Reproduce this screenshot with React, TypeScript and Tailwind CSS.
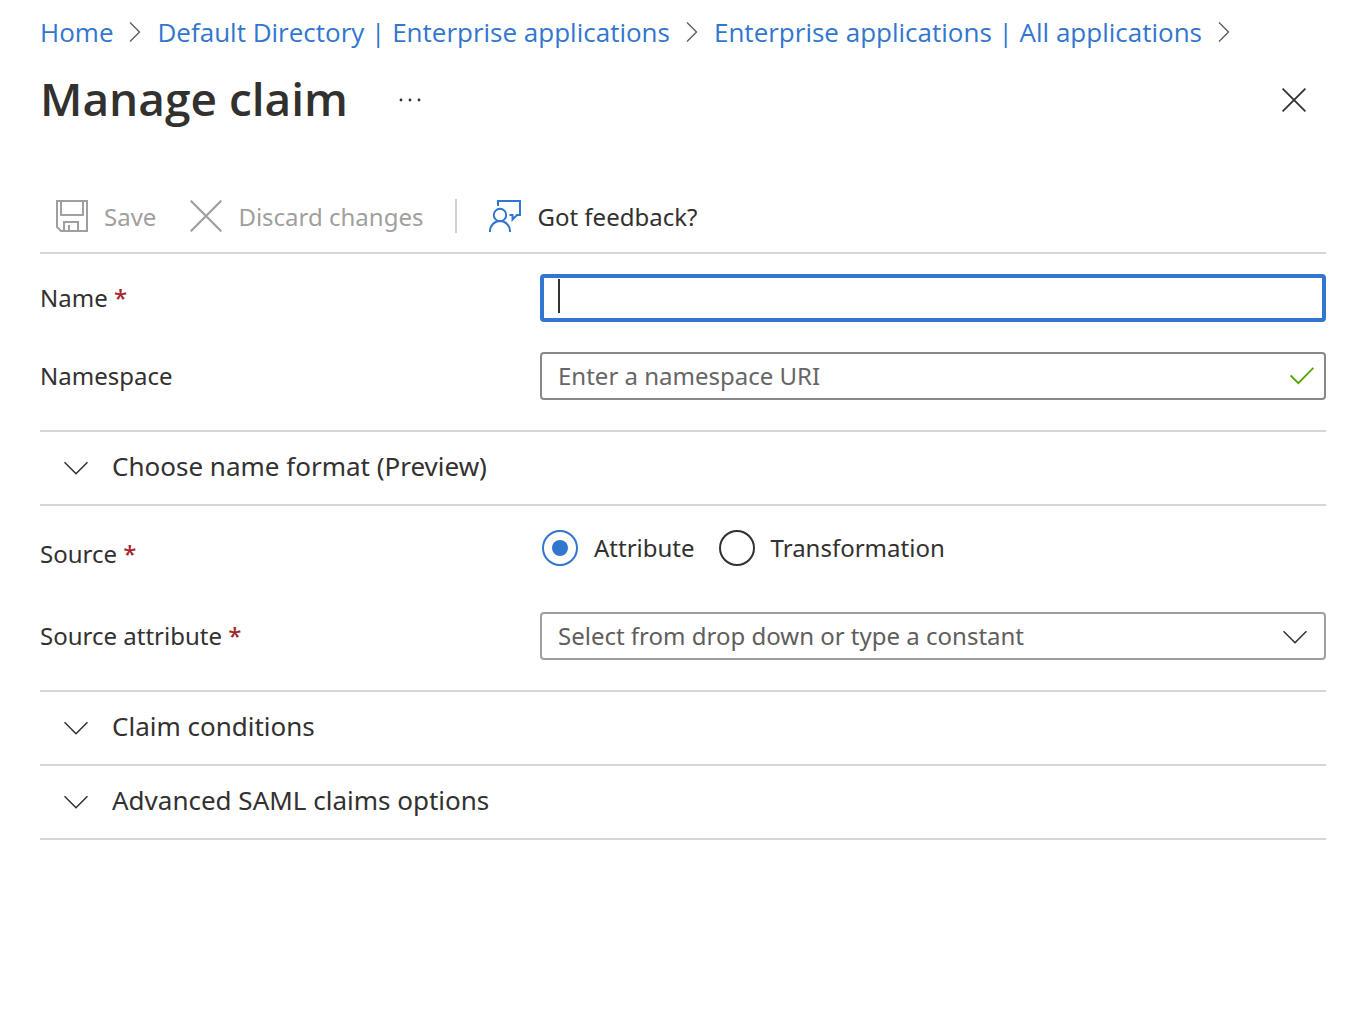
import { useState, type ReactNode } from "react";

const crumbs = [
  "Home",
  "Default Directory | Enterprise applications",
  "Enterprise applications | All applications",
];

function CrumbArrow() {
  return (
    <svg className="h-5 w-3 shrink-0" viewBox="0 0 12 20" fill="none" stroke="#605e5c" strokeWidth="1.4" aria-hidden="true">
      <path d="M1 0.5 10.5 10 1 19.5" />
    </svg>
  );
}

function ChevronDown() {
  return (
    <svg className="h-3.5 w-6 shrink-0" viewBox="0 0 24 14" fill="none" stroke="#323130" strokeWidth="1.6" aria-hidden="true">
      <path d="M0.5 1.2 12 12.7 23.5 1.2" />
    </svg>
  );
}

function SaveIcon() {
  return (
    <svg className="size-8 shrink-0" viewBox="0 0 32 32" fill="none" stroke="#a19f9d" strokeWidth="2" aria-hidden="true">
      <path d="M1 1H31V31H5L1 27Z" />
      <path d="M5 1V15H27V1" />
      <path d="M8 31V22H22V31M13 25V31" />
    </svg>
  );
}

function DiscardIcon() {
  return (
    <svg className="size-8 shrink-0" viewBox="0 0 32 32" fill="none" stroke="#a19f9d" strokeWidth="2.2" aria-hidden="true">
      <path d="M0.7 0.7 31.3 31.3M31.3 0.7 0.7 31.3" />
    </svg>
  );
}

function FeedbackIcon() {
  return (
    <svg className="size-8 shrink-0" viewBox="0 0 32 32" fill="none" stroke="#3276cf" strokeWidth="2" aria-hidden="true">
      <circle cx="11" cy="15" r="6.2" />
      <path d="M1 32V31A10 10 0 0 1 21 31V32" />
      <path d="M9 6V1H31V15H28L23.5 19.5V15H20.5" />
    </svg>
  );
}

function RequiredMark() {
  return <span className="font-medium text-[#a4262c]"> *</span>;
}

function Field({ label, htmlFor, required, children }: { label: string; htmlFor: string; required?: boolean; children: ReactNode }) {
  return (
    <div className="flex items-center">
      <label htmlFor={htmlFor} className="w-[500px] shrink-0">
        {label}
        {required && <RequiredMark />}
      </label>
      <div className="relative min-w-0 flex-1">{children}</div>
    </div>
  );
}

function Section({ title }: { title: string }) {
  return (
    <button type="button" aria-expanded="false" className="flex h-[74px] w-full items-center gap-6 border-b-2 border-[#d6d6d6] px-6 text-left text-[26px]">
      <ChevronDown />
      <span className="pb-1">{title}</span>
    </button>
  );
}

function Radio({ label, checked, onChange }: { label: string; checked: boolean; onChange: () => void }) {
  return (
    <label className="flex items-center gap-4">
      <span className="relative flex size-9 items-center justify-center">
        <input
          type="radio"
          name="source"
          checked={checked}
          onChange={onChange}
          className="peer absolute inset-0 appearance-none rounded-full border-2 border-[#323130] checked:border-[#3276cf]"
        />
        <span className="size-4 rounded-full peer-checked:bg-[#3276cf]" />
      </span>
      {label}
    </label>
  );
}

export default function App() {
  const [name, setName] = useState("");
  const [source, setSource] = useState("Attribute");

  return (
    <div className="min-h-screen bg-white px-10 font-['Noto_Sans','Open_Sans',sans-serif] text-[24px] leading-8 text-[#323130]">
      <nav aria-label="Breadcrumb" className="flex h-16 items-center gap-4 font-['Open_Sans','Noto_Sans',sans-serif] whitespace-nowrap text-[26px] text-[#3276cf]">
        {crumbs.map((crumb) => (
          <span key={crumb} className="flex items-center gap-4">
            <a href="#">{crumb}</a>
            <CrumbArrow />
          </span>
        ))}
      </nav>

      <header className="flex h-[72px] items-center pr-5">
        <h1 className="pb-1 font-['Open_Sans','Noto_Sans',sans-serif] text-[46px] leading-[68px] font-semibold">Manage claim</h1>
        <button type="button" aria-label="More options" className="ml-[50px]">
          <svg className="h-1 w-6" viewBox="0 0 24 4" fill="#323130" aria-hidden="true">
            <circle cx="3" cy="2" r="1.4" />
            <circle cx="12" cy="2" r="1.4" />
            <circle cx="21" cy="2" r="1.4" />
          </svg>
        </button>
        <button type="button" aria-label="Close" className="ml-auto">
          <svg className="size-6" viewBox="0 0 24 24" fill="none" stroke="#323130" strokeWidth="1.8" aria-hidden="true">
            <path d="M0.6 0.6 23.4 23.4M23.4 0.6 0.6 23.4" />
          </svg>
        </button>
      </header>

      <div role="toolbar" aria-label="Claim actions" className="mt-11 flex h-[74px] items-center border-b-2 border-[#d6d6d6] px-4">
        <button type="button" disabled className="flex items-center gap-4 text-[#a19f9d]">
          <SaveIcon />
          <span className="pt-0.5">Save</span>
        </button>
        <button type="button" disabled className="ml-[34px] flex items-center gap-4 text-[#a19f9d]">
          <DiscardIcon />
          <span className="pt-0.5">Discard changes</span>
        </button>
        <span className="mx-8 h-[34px] w-0.5 bg-[#d0d0d0]" />
        <button type="button" className="flex items-center gap-4">
          <FeedbackIcon />
          <span className="pt-0.5">Got feedback?</span>
        </button>
      </div>

      <main>
        <div className="flex flex-col gap-[30px] border-b-2 border-[#d6d6d6] pt-5 pb-[30px]">
          <Field label="Name" htmlFor="name" required>
            <input
              id="name"
              type="text"
              value={name}
              onChange={(e) => setName(e.target.value)}
              className="block h-12 w-full rounded-sm border-4 border-[#3276cf] px-3.5 caret-transparent outline-none"
            />
            {name === "" && <span className="pointer-events-none absolute top-[5px] left-[18px] h-[34px] w-0.5 bg-[#323130]" />}
          </Field>
          <Field label="Namespace" htmlFor="namespace">
            <input
              id="namespace"
              type="text"
              placeholder="Enter a namespace URI"
              className="block h-12 w-full rounded-sm border-2 border-[#8a8886] pr-12 pb-0.5 pl-4 placeholder:text-[#666666] placeholder:opacity-100"
            />
            <svg className="absolute top-[15px] right-3 h-[18px] w-6" viewBox="0 0 24 18" fill="none" stroke="#57a300" strokeWidth="1.8" aria-hidden="true">
              <path d="M0.6 8.5 8.3 16.2 23.4 0.8" />
            </svg>
          </Field>
        </div>

        <Section title="Choose name format (Preview)" />

        <div className="flex flex-col border-b-2 border-[#d6d6d6] pt-6 pb-[30px]">
          <fieldset className="flex items-start">
            <legend className="float-left w-[502px] pt-2">
              Source
              <RequiredMark />
            </legend>
            <div className="flex gap-6">
              <Radio label="Attribute" checked={source === "Attribute"} onChange={() => setSource("Attribute")} />
              <Radio label="Transformation" checked={source === "Transformation"} onChange={() => setSource("Transformation")} />
            </div>
          </fieldset>
          <div className="mt-[42px]">
            <Field label="Source attribute" htmlFor="source-attribute" required>
              <select
                id="source-attribute"
                defaultValue=""
                className="block h-12 w-full appearance-none rounded-sm border-2 border-[#a19f9d] bg-white pr-14 pl-4 text-[#605e5c]"
              >
                <option value="">Select from drop down or type a constant</option>
              </select>
              <span className="pointer-events-none absolute top-[18px] right-[19px] flex">
                <ChevronDown />
              </span>
            </Field>
          </div>
        </div>

        <Section title="Claim conditions" />
        <Section title="Advanced SAML claims options" />
      </main>
    </div>
  );
}
